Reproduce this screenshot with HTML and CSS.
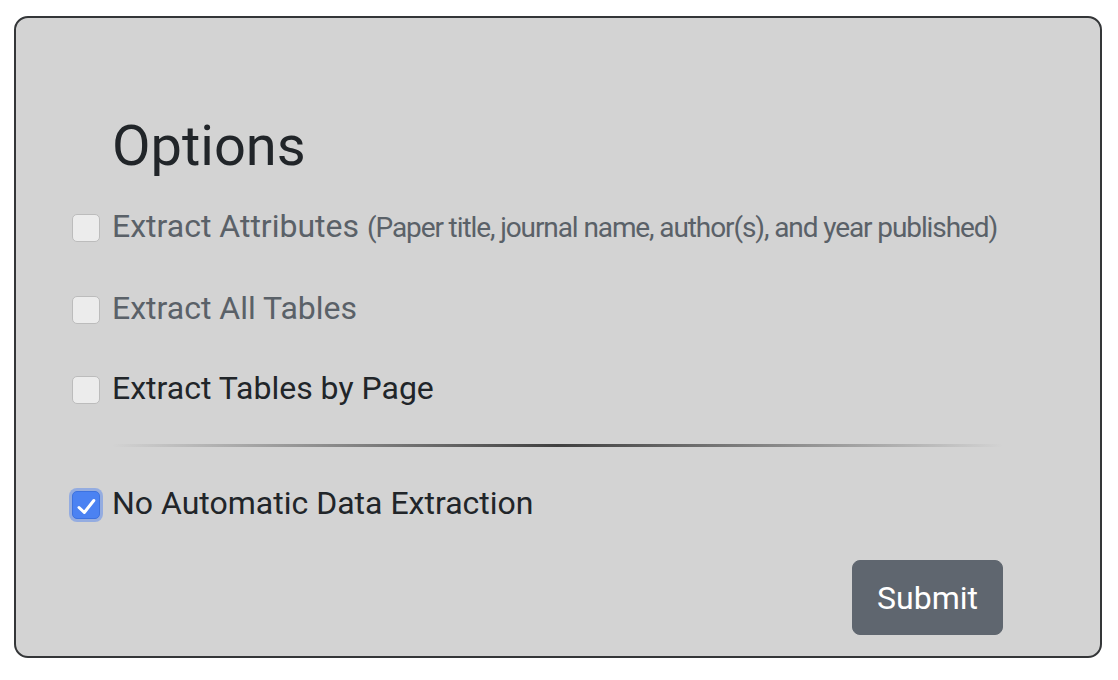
FILE: index.html
```html
<!DOCTYPE html>
<html lang="en">
<head>
<meta charset="utf-8">
<title>Options</title>
<link rel="stylesheet" href="styles.css">
</head>
<body>
<div class="card">
  <h3 class="title">Options</h3>
  <div class="options">
    <label class="check muted">
      <span class="box"></span>
      <span class="lbl">Extract Attributes <small class="hint">(Paper title, journal name, author(s), and year published)</small></span>
    </label>
    <label class="check muted">
      <span class="box"></span>
      <span class="lbl">Extract All Tables</span>
    </label>
    <label class="check">
      <span class="box"></span>
      <span class="lbl">Extract Tables by Page</span>
    </label>
  </div>
  <hr class="divider">
  <label class="check">
    <span class="box checked"><svg viewBox="0 0 28 28" width="28" height="28"><path d="M7 16.5 L12.3 21.5 L21.8 9.5" fill="none" stroke="#fff" stroke-width="3" stroke-linecap="round" stroke-linejoin="round"/></svg></span>
    <span class="lbl">No Automatic Data Extraction</span>
  </label>
  <div class="actions">
    <button class="btn" type="button">Submit</button>
  </div>
</div>
</body>
</html>
```
FILE: styles.css
```css
html, body {
  margin: 0;
  padding: 0;
  background: #ffffff;
}
body {
  font-family: Roboto, "Liberation Sans", Arial, sans-serif;
  color: #212529;
}
.card {
  box-sizing: border-box;
  width: 1088px;
  height: 642px;
  margin: 16px 0 0 14px;
  padding: 95px 97px 0 96px;
  background: #d3d3d3;
  border: 2px solid #343638;
  border-radius: 14px;
}
.title {
  margin: 0 0 22px;
  font-size: 56px;
  line-height: 1.2;
  font-weight: 400;
  color: #212529;
}
.options {
  display: flex;
  flex-direction: column;
  gap: 32px;
}
.check {
  display: flex;
  align-items: flex-start;
  gap: 12px;
  margin-left: -40px;
  font-size: 32px;
  line-height: 48px;
  color: #212529;
  white-space: nowrap;
}
.check.muted {
  color: #5a6168;
}
.box {
  box-sizing: border-box;
  flex: none;
  width: 28px;
  height: 28px;
  margin-top: 12px;
  background: #ececec;
  border: 1px solid #bcbcbc;
  border-radius: 5px;
}
.box.checked {
  background: #4b82f2;
  border-color: #3d72df;
  box-shadow: 0 0 0 3px rgba(96, 140, 235, 0.55);
  display: flex;
}
.box.checked svg {
  margin: -1px;
}
.hint {
  font-size: 28px;
  letter-spacing: -1.1px;
}
.divider {
  height: 3px;
  margin: 32px 0;
  border: 0;
  background: linear-gradient(to right, rgba(51, 51, 51, 0), rgba(51, 51, 51, 0.92) 50%, rgba(51, 51, 51, 0));
}
.actions {
  display: flex;
  justify-content: flex-end;
  margin-top: 33px;
}
.btn {
  box-sizing: border-box;
  width: 151px;
  height: 75px;
  padding: 0;
  font-family: Roboto, "Liberation Sans", Arial, sans-serif;
  font-size: 32px;
  line-height: 48px;
  color: #ffffff;
  background: #5f666f;
  border: 1px solid #5f666f;
  border-radius: 8px;
}
```
